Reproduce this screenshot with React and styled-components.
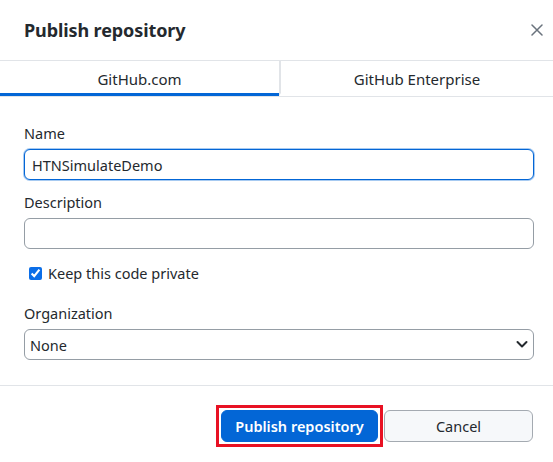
import React from 'react';
import styled, { createGlobalStyle } from 'styled-components';

const GlobalStyle = createGlobalStyle`
  html, body {
    margin: 0;
    padding: 0;
    background: #ffffff;
  }
  body {
    font-family: 'Noto Sans', 'Open Sans', sans-serif;
    color: #24292e;
  }
  * {
    box-sizing: border-box;
  }
`;

const Dialog = styled.div`
  width: 553px;
  height: 462px;
  background: #ffffff;
  display: flex;
  flex-direction: column;
`;

const Header = styled.header`
  height: 60px;
  display: flex;
  align-items: center;
  justify-content: space-between;
  padding: 0 2px 0 24px;
`;

const Title = styled.h1`
  margin: 0;
  font-size: 18px;
  font-weight: 700;
  color: #24292e;
  letter-spacing: -0.1px;
`;

const CloseButton = styled.button`
  width: 28px;
  height: 28px;
  border: none;
  background: transparent;
  display: flex;
  align-items: center;
  justify-content: center;
  padding: 0;
  cursor: pointer;
  color: #6a737d;
`;

const TabBar = styled.div`
  display: flex;
  border-top: 1px solid #e1e4e8;
  border-bottom: 1px solid #e1e4e8;
`;

const Tab = styled.button`
  flex: 1;
  height: 35px;
  border: none;
  border-bottom: 3px solid ${(p) => (p.$active ? '#0366d6' : 'transparent')};
  border-left: ${(p) => (p.$divider ? '2px solid #e1e4e8' : 'none')};
  background: #ffffff;
  font-family: inherit;
  font-size: 15px;
  color: #24292e;
  padding: 3px 0 0;
  cursor: pointer;
`;

const ActiveTab = styled(Tab)`
  flex: 0 0 279px;
`;

const Form = styled.div`
  display: flex;
  flex-direction: column;
  padding: 27px 19px 25px 24px;
  border-bottom: 1px solid #e1e4e8;
`;

const Field = styled.div`
  display: flex;
  flex-direction: column;
  gap: 7px;
  margin-bottom: ${(p) => p.$gap || 0}px;
`;

const Label = styled.label`
  font-size: 14.5px;
  line-height: 18px;
  color: #24292e;
`;

const TextInput = styled.input`
  height: 31px;
  width: 100%;
  border: 1px solid ${(p) => (p.$focused ? '#0366d6' : '#959da5')};
  box-shadow: ${(p) => (p.$focused ? '0 0 0 1px rgba(3, 102, 214, 0.35)' : 'none')};
  border-radius: 6px;
  padding: 0 7px;
  font-family: inherit;
  font-size: 14.5px;
  color: #24292e;
  outline: none;
  background: #ffffff;
`;

const CheckRow = styled.label`
  display: flex;
  align-items: center;
  gap: 6px;
  padding-left: 5px;
  font-size: 14.5px;
  color: #24292e;
  margin-bottom: 21px;
`;

const Checkbox = styled.input`
  width: 13px;
  height: 13px;
  margin: 0;
  accent-color: #0b6ee8;
`;

const SelectWrap = styled.div`
  position: relative;
`;

const Select = styled.select`
  appearance: none;
  height: 31px;
  width: 100%;
  border: 1px solid #959da5;
  border-radius: 6px;
  padding: 0 28px 0 5px;
  font-family: inherit;
  font-size: 14.5px;
  color: #24292e;
  background: #ffffff;
  outline: none;
`;

const Chevron = styled.svg`
  position: absolute;
  right: 6px;
  top: 10px;
  pointer-events: none;
`;

const Footer = styled.footer`
  display: flex;
  justify-content: flex-end;
  gap: 6px;
  padding: 24px 20px 0 0;
`;

const Button = styled.button`
  height: 32px;
  border-radius: 6px;
  font-family: inherit;
  font-size: 14.5px;
  cursor: pointer;
`;

const PrimaryButton = styled(Button)`
  position: relative;
  width: 157px;
  background: #0366d6;
  border: 1px solid #0366d6;
  color: #ffffff;
  font-weight: 600;

  &::after {
    content: '';
    position: absolute;
    inset: -6px -6px -6px -6px;
    border: 3px solid #e81123;
    pointer-events: none;
  }
`;

const SecondaryButton = styled(Button)`
  width: 149px;
  background: #f6f8fa;
  border: 1px solid #a4aab1;
  color: #24292e;
`;

export default function App() {
  return (
    <>
      <GlobalStyle />
      <Dialog>
        <Header>
          <Title>Publish repository</Title>
          <CloseButton aria-label="Close">
            <svg width="12" height="12" viewBox="0 0 12 12">
              <path d="M1 1L11 11M11 1L1 11" stroke="currentColor" strokeWidth="1.5" strokeLinecap="round" />
            </svg>
          </CloseButton>
        </Header>
        <TabBar>
          <ActiveTab $active>GitHub.com</ActiveTab>
          <Tab $divider>GitHub Enterprise</Tab>
        </TabBar>
        <Form>
          <Field $gap={13}>
            <Label>Name</Label>
            <TextInput $focused defaultValue="HTNSimulateDemo" />
          </Field>
          <Field $gap={14}>
            <Label>Description</Label>
            <TextInput defaultValue="" />
          </Field>
          <CheckRow>
            <Checkbox type="checkbox" defaultChecked />
            Keep this code private
          </CheckRow>
          <Field>
            <Label>Organization</Label>
            <SelectWrap>
              <Select defaultValue="none">
                <option value="none">None</option>
              </Select>
              <Chevron width="12" height="10" viewBox="0 0 12 10">
                <path d="M1.5 3L6 7.5L10.5 3" fill="none" stroke="#24292e" strokeWidth="2" strokeLinecap="round" strokeLinejoin="round" />
              </Chevron>
            </SelectWrap>
          </Field>
        </Form>
        <Footer>
          <PrimaryButton>Publish repository</PrimaryButton>
          <SecondaryButton>Cancel</SecondaryButton>
        </Footer>
      </Dialog>
    </>
  );
}
